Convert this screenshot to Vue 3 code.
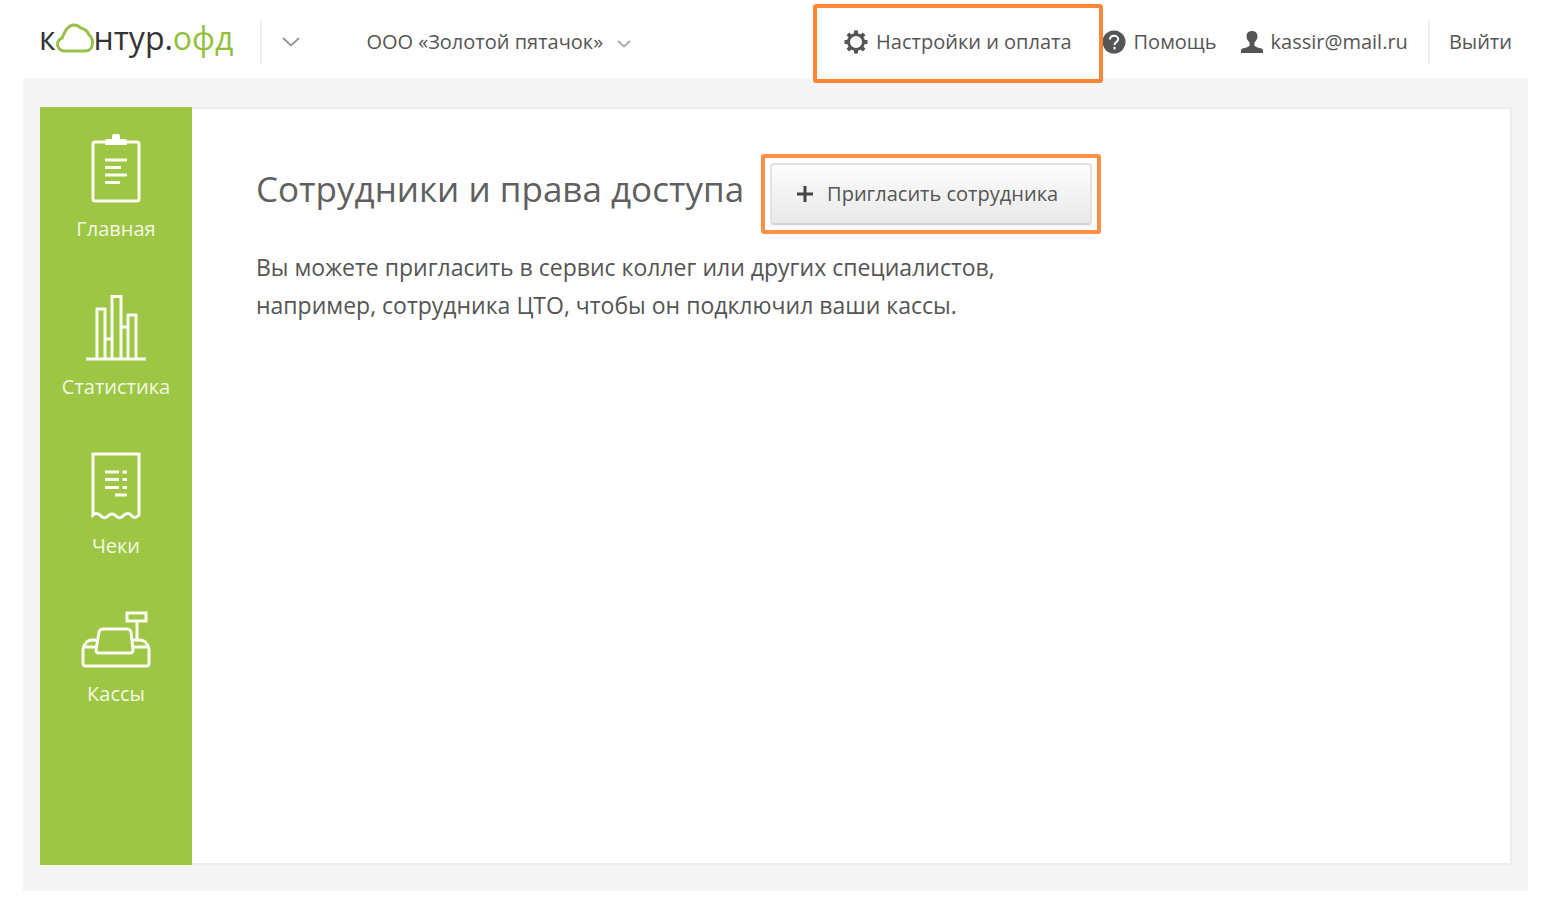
<script setup>
const sections = [
  { id: 'home', label: 'Главная' },
  { id: 'stats', label: 'Статистика' },
  { id: 'receipts', label: 'Чеки' },
  { id: 'registers', label: 'Кассы' },
]
</script>

<template>
  <div class="app">
    <header class="header">
      <a class="logo" href="#" aria-label="Контур.ОФД">
        <span>к</span>
        <svg class="cloud" width="38" height="30" viewBox="0 0 38 30" aria-hidden="true">
          <path d="M9 28C4.500 28 1.500 25 1.500 21.300c0-3 2-5.200 4.600-6.200C7.500 11.500 9 8 11.500 5.300 13.300 3 15.200 2 17.800 2c2.700 0 5 .8 7 3 3.600 1 6.800 2.600 8 6.600 2.600 2 3.700 4.600 3.700 8 0 5.400-3 8.400-7 8.400z" />
        </svg>
        <span>нтур.</span><span class="green">офд</span>
      </a>
      <button class="services" type="button" aria-label="Сервисы">
        <svg width="20" height="14" viewBox="0 0 20 14" aria-hidden="true"><path d="M2 3 10 10.500 18 3" /></svg>
      </button>
      <button class="company" type="button">
        ООО «Золотой пятачок»
        <svg width="14" height="10" viewBox="0 0 14 10" aria-hidden="true"><path d="M1 2 7 7.500 13 2" /></svg>
      </button>
      <nav class="links" aria-label="Аккаунт">
        <a class="settings" href="#">
          <svg width="24" height="24" viewBox="0 0 24 24" aria-hidden="true">
            <circle class="ring" cx="12" cy="12" r="7.500" />
            <path class="teeth" d="M12 .5v4M12 19.500v4M.5 12h4M19.500 12h4M3.900 3.900l2.800 2.800M17.300 17.300l2.800 2.800M3.900 20.100l2.800-2.800M17.300 6.700l2.800-2.800" />
          </svg>
          Настройки и оплата
        </a>
        <a class="help" href="#">
          <svg width="24" height="24" viewBox="0 0 24 24" aria-hidden="true">
            <circle cx="12" cy="12" r="11.500" />
            <path class="mark" d="M8 9.500C8 7 9.700 5.700 12 5.700s4.200 1.400 4.200 3.500c0 2.800-3.700 2.900-3.700 5.800M12.500 16.800v2.600" />
          </svg>
          Помощь
        </a>
        <a class="user" href="#">
          <svg width="22" height="22" viewBox="0 0 22 22" aria-hidden="true">
            <path d="M11 0c3.500 0 5.500 2.200 5.500 5.300 0 2.700-1.300 4.500-3 5.900v3.600c1.500 1.700 4.500 2 7 2.700 1 .3 1.500 1 1.500 2V22H0v-2.500c0-1 .5-1.700 1.500-2 2.500-.7 5.500-1 7-2.700v-3.600c-1.700-1.400-3-3.200-3-5.900C5.500 2.200 7.500 0 11 0z" />
          </svg>
          kassir@mail.ru
        </a>
        <a class="exit" href="#">Выйти</a>
      </nav>
    </header>

    <div class="stage">
      <div class="panel">
        <nav class="sidebar" aria-label="Разделы">
          <a v-for="s in sections" :key="s.id" class="section" href="#">
            <svg v-if="s.id === 'home'" width="50" height="69" viewBox="0 0 50 69" aria-hidden="true">
              <rect x="2" y="8" width="46" height="59" rx="2" />
              <path class="solid" d="M14 11V7q0-2 2-2h5V2q0-2 2-2h4q2 0 2 2v3h5q2 0 2 2v4z" />
              <path d="M14 26h22M14 33.500h16M14 41h22M14 48.500h15" />
            </svg>
            <svg v-else-if="s.id === 'stats'" width="60" height="67" viewBox="0 0 60 67" aria-hidden="true">
              <path d="M0 65h60M11 65V15h8v50M26 65V2.500h9V65M42 65V21h8v44M19 45h7M35 33h7" />
            </svg>
            <svg v-else-if="s.id === 'receipts'" width="50" height="68" viewBox="0 0 50 68" aria-hidden="true">
              <path d="M2 63V2h46v61q-4 5-8 0-3-3-7 0-4 5-8 1-4-4-8 0-4 4-8-1-4-3-7 0z" />
              <path d="M14 20h14M14 27.500h14M14 35.500h14M24 43h12M31.500 20H36M31.500 27.500H36M31.500 35.500H36" />
            </svg>
            <svg v-else width="70" height="57" viewBox="0 0 70 57" aria-hidden="true">
              <path d="M15 29h-4Q7 29 5 32 2 35 2 38v14q0 3 3 3h60q3 0 3-3V38q0-3-3-6-2-3-6-3h-9M3 36h12M52 36h15" />
              <path d="M22 18h24q3 0 4 3l2 18q0 3-3 3H18q-3 0-3-3l3-18q1-3 4-3zM46 2h19v8H46zM56 10v19" />
            </svg>
            <span>{{ s.label }}</span>
          </a>
        </nav>

        <main class="content">
          <div class="title-row">
            <h1>Сотрудники и права доступа</h1>
            <div class="highlight">
              <button class="invite" type="button">
                <svg width="16" height="16" viewBox="0 0 16 16" aria-hidden="true"><path d="M0 8h16M8 0v16" /></svg>
                Пригласить сотрудника
              </button>
            </div>
          </div>
          <p>
            Вы можете пригласить в сервис коллег или других специалистов,<br />
            например, сотрудника ЦТО, чтобы он подключил ваши кассы.
          </p>
        </main>
      </div>
    </div>
  </div>
</template>

<style>
body {
  background: #fff;
}
</style>

<style scoped>
.app {
  box-sizing: border-box;
  display: flex;
  flex-direction: column;
  min-height: 100vh;
  padding: 0 21px 22px 23px;
  color: #555;
  font: 20px/24px "Open Sans", "Noto Sans", sans-serif;
}
a {
  color: inherit;
  text-decoration: none;
}
button {
  padding: 0;
  border: 0;
  background: none;
  color: inherit;
  font: inherit;
  cursor: pointer;
}
svg {
  flex: none;
  fill: none;
}
.header {
  box-sizing: border-box;
  display: flex;
  align-items: center;
  height: 78px;
  padding: 6px 16px 0;
  white-space: nowrap;
}
.logo {
  display: flex;
  align-items: center;
  padding-bottom: 8px;
  color: #333;
  font-size: 32px;
  font-weight: 500;
  line-height: 40px;
}
.cloud {
  stroke: #98c04a;
  stroke-width: 3;
}
.green {
  color: #94bf3d;
}
.services {
  display: flex;
  align-items: center;
  height: 44px;
  margin-left: 27px;
  padding-left: 19px;
  border-left: 2px solid #eee;
}
.services svg {
  stroke: #999;
  stroke-width: 2;
}
.company {
  display: flex;
  align-items: center;
  gap: 14px;
  margin-left: 65px;
}
.company svg {
  margin-top: 4px;
  stroke: #aaa;
  stroke-width: 2;
}
.links {
  display: flex;
  align-items: center;
  margin-left: auto;
}
.links a {
  display: flex;
  align-items: center;
}
.links .settings {
  position: relative;
  z-index: 1;
  box-sizing: border-box;
  height: 79px;
  margin: 0 -1px -3px 0;
  padding: 0 27px 3px 27px;
  border: 4px solid #ff8636;
  border-radius: 3px;
  gap: 8px;
}
.ring {
  stroke: #555;
  stroke-width: 3;
}
.teeth {
  stroke: #555;
  stroke-width: 4;
}
.help {
  gap: 8px;
}
.help circle,
.user path {
  fill: #555;
}
.mark {
  stroke: #fff;
  stroke-width: 2;
}
.user {
  gap: 8px;
  margin-left: 24px;
}
.exit {
  height: 44px;
  margin-left: 20px;
  padding-left: 19px;
  border-left: 2px solid #eee;
}
.stage {
  display: flex;
  flex: 1;
  padding: 29px 16px 26px 17px;
  background: #f5f5f5;
}
.panel {
  display: flex;
  flex: 1;
  background: #fff;
}
.sidebar {
  display: flex;
  flex-direction: column;
  gap: 53px;
  box-sizing: border-box;
  width: 152px;
  padding-top: 27px;
  background: #9dc645;
  color: #f2f8e2;
}
.section {
  display: flex;
  flex-direction: column;
  align-items: center;
  gap: 14px;
}
.section svg {
  stroke: #fbfdf4;
  stroke-width: 3;
}
.section .solid {
  fill: #fff;
  stroke: none;
}
.content {
  flex: 1;
  padding: 45px 64px;
  border: 2px solid #ededed;
  border-left: 0;
}
.title-row {
  display: flex;
  align-items: center;
  gap: 17px;
  white-space: nowrap;
}
h1 {
  margin: 0 0 10px;
  color: #5f5f5f;
  font-size: 35px;
  font-weight: 400;
  line-height: 48px;
}
.highlight {
  padding: 5px;
  border: 4px solid #ff8f42;
  border-radius: 3px;
}
.invite {
  display: flex;
  align-items: center;
  gap: 14px;
  box-sizing: border-box;
  height: 62px;
  padding: 0 32px 0 25px;
  border: 2px solid #e2e2e2;
  border-bottom-color: #d2d2d2;
  border-radius: 4px;
  background: linear-gradient(#fdfdfd, #e9e9e9);
}
.invite svg {
  stroke: #444;
  stroke-width: 3;
}
p {
  margin: 14px 0 0;
  font-size: 23px;
  line-height: 38px;
}
</style>
